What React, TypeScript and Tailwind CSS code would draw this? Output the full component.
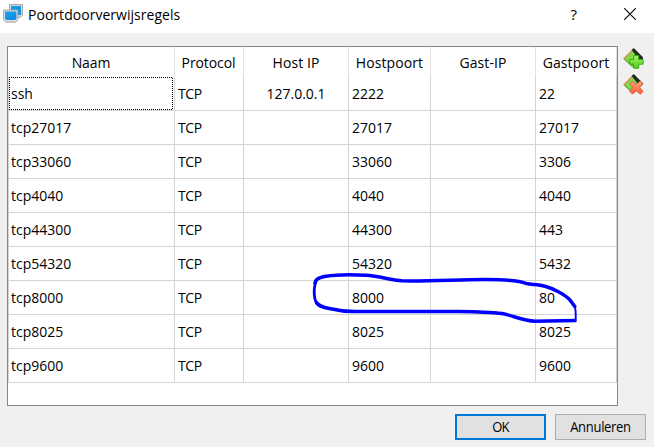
import type { ReactNode } from "react";

type Rule = { name: string; hostIp?: string; hostPort: string; guestPort: string };

const rules: Rule[] = [
  { name: "ssh", hostIp: "127.0.0.1", hostPort: "2222", guestPort: "22" },
  { name: "tcp27017", hostPort: "27017", guestPort: "27017" },
  { name: "tcp33060", hostPort: "33060", guestPort: "3306" },
  { name: "tcp4040", hostPort: "4040", guestPort: "4040" },
  { name: "tcp44300", hostPort: "44300", guestPort: "443" },
  { name: "tcp54320", hostPort: "54320", guestPort: "5432" },
  { name: "tcp8000", hostPort: "8000", guestPort: "80" },
  { name: "tcp8025", hostPort: "8025", guestPort: "8025" },
  { name: "tcp9600", hostPort: "9600", guestPort: "9600" },
];

const headers = [
  { label: "Naam", spacing: "tracking-[-0.1px]" },
  { label: "Protocol", spacing: "tracking-[-0.1px] pr-px" },
  { label: "Host IP", spacing: "tracking-[0.1px]" },
  { label: "Hostpoort", spacing: "tracking-[0.1px]" },
  { label: "Gast-IP", spacing: "tracking-[0.1px]" },
  { label: "Gastpoort", spacing: "tracking-[0.1px]" },
];

const columns = "grid grid-cols-[167px_69px_105px_82px_105px_81px]";
const cell = "flex items-center border-r border-b border-[#d4d4d4] pl-[3px]";

function Tall({ children }: { children: ReactNode }) {
  return <span className="inline-block scale-y-[1.08]">{children}</span>;
}

function AppIcon() {
  return (
    <svg width="21" height="20" viewBox="0 0 21 20">
      <defs>
        <linearGradient id="screen" x1="0" y1="0" x2="1" y2="1">
          <stop offset="0" stopColor="#11a4f2" />
          <stop offset="1" stopColor="#1688de" />
        </linearGradient>
      </defs>
      <path d="M6.500.5h13v10.500l-2 2.300H8.500l-2-2z" fill="#d8d8d8" stroke="#a8a8a8" />
      <path d="M8 2h10v8.900H8z" fill="url(#screen)" />
      <path d="M.600 6.100h14.200v9.500l-2 2.500h-10l-2.200-2.300z" fill="#dedede" stroke="#a5a5a5" />
      <path d="M2 7.500h11.400v7l-1.200 1.400H3.400L2 14.500z" fill="url(#screen)" />
    </svg>
  );
}

function RuleIcon({ kind }: { kind: "add" | "remove" }) {
  const add = kind === "add";
  return (
    <svg width="21" height="21" viewBox="0 0 21 21">
      <defs>
        <linearGradient id={kind} x1="0" y1="0" x2="0" y2="1">
          <stop offset="0" stopColor={add ? "#a8f06a" : "#ffa184"} />
          <stop offset="1" stopColor={add ? "#4fd012" : "#fb5a34"} />
        </linearGradient>
      </defs>
      <path d="M10 1.500.8 10.900 9.500 19l9.200-9z" fill="#68c832" stroke="#558a38" strokeWidth=".7" />
      <path d="M2 10.800 9.300 3.200l4.200 4.300-6.800 7.500z" fill="#7fd948" />
      <path d="M.6 10.900 9.500 1.900" stroke="#ee9660" strokeWidth="1.200" />
      <path d="m8.600 2 2.200-2 9.200 9.300v1.700h-4z" fill="#262a26" />
      {add ? (
        <path
          d="M10.700 7.500h5v4h4.400v4.700h-4.400v4h-5v-4H6.700v-4.700h4z"
          fill="url(#add)"
          stroke="#3aa718"
          strokeLinejoin="round"
        />
      ) : (
        <path
          d="m9.300 7.300 4 3 4-3 2.400 2.500-2.800 3.700 3.200 4-2.700 2.600-4.100-3-4 3-2.500-2.700 3-3.900-2.900-3.700z"
          fill="url(#remove)"
          stroke="#dd6849"
          strokeLinejoin="round"
        />
      )}
    </svg>
  );
}

function PenMark() {
  return (
    <svg
      className="pointer-events-none absolute top-[270px] left-[310px]"
      width="270"
      height="55"
      viewBox="310 270 270 55"
      fill="none"
      stroke="#0000fe"
      strokeLinejoin="round"
    >
      <path
        d="M315 284C315 279 319 277.500 326 276.300C337 274.500 354 274.600 366 275.300C380 276.200 390 280 402 280.800C431 281.400 461 279.300 487 279.500C503 279.600 518 280.200 526 283.300C531 285 538 283.700 545 286.300C552 288.300 564 293.500 570 300L575.500 307.500"
        strokeWidth="3.500"
      />
      <path d="M315.200 283C314 289 313.800 297 316 302Q318 306 323 307" strokeWidth="2.800" />
      <path
        d="M316 302Q319 306.500 328 308.300C338 310.700 347 312 359 311.500C394 311.800 427 311.300 459 311.500C473 311.700 488 312 502 313.500C514 316 523 320.500 535 321.300Q555 321 576 320.600"
        strokeWidth="3.500"
      />
      <path d="M574.500 305.500Q576 308 575.700 322" strokeWidth="1.900" />
    </svg>
  );
}

function FocusFrame() {
  return (
    <svg
      className="absolute top-0 left-0"
      width="164"
      height="33"
      fill="none"
      stroke="black"
      strokeDasharray="1 1"
    >
      <path d="M0 .5H164M0 32.500H164M.5 0V33M163.500 1V33" />
    </svg>
  );
}

export default function App() {
  return (
    <div className="relative flex h-[447px] w-[654px] flex-col overflow-hidden bg-[#f0f0f0] font-['Open_Sans','Noto_Sans',sans-serif] text-[14px] leading-[20px] text-black">
      <header className="flex h-[33px] shrink-0 items-start bg-white pl-[3px]">
        <div className="pt-1">
          <AppIcon />
        </div>
        <h1 className="mt-[5px] ml-1 tracking-[0.03px]">
          <Tall>Poortdoorverwijsregels</Tall>
        </h1>
        <span className="mt-1 ml-auto text-[15px]">?</span>
        <svg className="mt-2 mr-[18px] ml-[47px]" width="12" height="12" viewBox="0 0 12 12">
          <path d="m.2.200 11.600 11.600m0-11.600-11.600 11.600" stroke="#000" strokeWidth="1.100" />
        </svg>
      </header>

      <main className="mt-[13px] flex pl-[7px]">
        <div className="h-[360px] w-[611px] border border-[#828790] bg-white">
          <div className={`${columns} h-[30px]`}>
            {headers.map((h) => (
              <div
                key={h.label}
                className={`flex items-center justify-center border-r border-[#e2e2e2] pt-[2px] ${h.spacing}`}
              >
                <Tall>{h.label}</Tall>
              </div>
            ))}
          </div>
          {rules.map((r, i) => (
            <div key={r.name} className={`${columns} h-[34px]`}>
              <div className="relative flex items-center border-r border-b border-l border-[#d4d4d4] pl-[2px]">
                <Tall>{r.name}</Tall>
                {i === 0 && <FocusFrame />}
              </div>
              <div className={`${cell} tracking-[-0.4px]`}>
                <Tall>TCP</Tall>
              </div>
              <div className={`${cell} justify-center pr-[3px]`}>
                <Tall>{r.hostIp}</Tall>
              </div>
              <div className={cell}>
                <Tall>{r.hostPort}</Tall>
              </div>
              <div className={cell} />
              <div className={cell}>
                <Tall>{r.guestPort}</Tall>
              </div>
            </div>
          ))}
        </div>
        <aside className="flex flex-col gap-[5px] pt-[2px] pl-[5px]">
          <RuleIcon kind="add" />
          <RuleIcon kind="remove" />
        </aside>
      </main>

      <footer className="mt-2 flex justify-end gap-[9px] pr-[8px] text-[13px]">
        <button className="h-[26px] w-[91px] border-2 border-[#0078d7] bg-[#e1e1e1] tracking-[-0.9px]">
          <Tall>OK</Tall>
        </button>
        <button className="h-[26px] w-[91px] border border-[#adadad] bg-[#e1e1e1] tracking-[-0.3px]">
          <Tall>Annuleren</Tall>
        </button>
      </footer>
      <PenMark />
    </div>
  );
}
